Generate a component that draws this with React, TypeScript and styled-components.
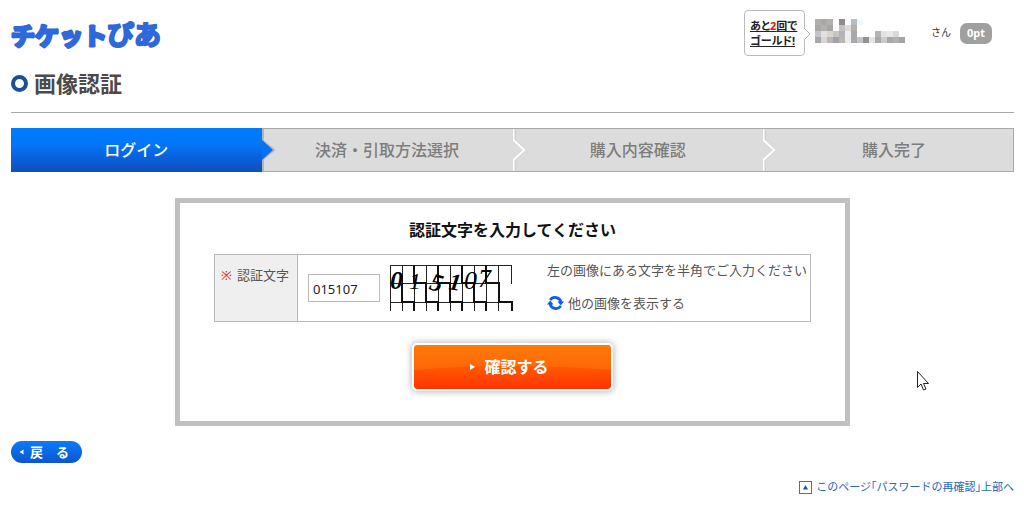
import React, { useState } from "react";
import styled, { createGlobalStyle } from "styled-components";

const GlobalStyle = createGlobalStyle`
  *, *::before, *::after { box-sizing: border-box; }
  body {
    margin: 0;
    background: #fff;
    color: #555;
    font-family: "Noto Sans", "Noto Sans CJK JP", sans-serif;
    font-size: 13px;
    line-height: 20px;
  }
`;

const Page = styled.div`
  position: relative;
  padding: 10px 10px 12px 11px;
`;

const Header = styled.header`
  display: flex;
  justify-content: space-between;
  align-items: flex-start;
  height: 46px;
`;

const LogoLink = styled.a`
  display: block;
  svg { display: block; }
`;

const Member = styled.div`
  display: flex;
  align-items: center;
  padding-right: 22px;
`;

const Balloon = styled.a`
  position: relative;
  width: 61px;
  height: 46px;
  padding: 7px 0 0 5px;
  border: 1px solid #bbb;
  border-radius: 4px;
  color: #222;
  font-size: 11px;
  font-weight: 700;
  line-height: 15px;
  white-space: nowrap;
  font-feature-settings: "palt";
  em { color: #f01010; font-style: normal; }
`;

const BalloonTail = styled.svg`
  position: absolute;
  top: 16px;
  left: 59px;
`;

const MaskedName = styled.svg`
  margin: 0 26px 4px 10px;
`;

const Honorific = styled.span`
  margin: 0 9px 2px 0;
  color: #333;
  font-size: 10px;
`;

const Points = styled.span`
  width: 32px;
  height: 21px;
  border-radius: 7px;
  background: #a0a0a0;
  color: #fff;
  font-size: 11px;
  font-weight: 700;
  text-align: center;
`;

const Title = styled.h1`
  display: flex;
  align-items: center;
  gap: 6px;
  height: 57px;
  margin: 0 0 15px;
  padding-bottom: 2px;
  border-bottom: 1px solid #aaa;
  color: #4c4948;
  font-size: 22px;
  font-weight: 700;
  line-height: 30px;
`;

const Ring = styled.span`
  width: 17px;
  height: 17px;
  border: 4px solid #1b4f9c;
  border-radius: 50%;
`;

const Steps = styled.ol`
  display: grid;
  grid-template-columns: repeat(4, 1fr);
  height: 44px;
  margin: 0 0 26px;
  padding: 0;
  list-style: none;
`;

const Step = styled.li<{ $current?: boolean; $last?: boolean }>`
  position: relative;
  display: flex;
  align-items: center;
  justify-content: center;
  padding-left: ${(p) => (p.$last ? "12px" : "0")};
  border: solid #aaa;
  border-width: ${(p) => (p.$current ? "0" : p.$last ? "1px 1px 1px 0" : "1px 0")};
  background: ${(p) =>
    p.$current ? "linear-gradient(#007bff 0%, #0277fa 35%, #0a5fdb 70%, #114fba 100%)" : "#dcdcdc"};
  color: ${(p) => (p.$current ? "#fff" : "#7d7d7d")};
  font-size: 16px;
  font-weight: 500;
`;

const StepArrow = styled.svg<{ $current?: boolean }>`
  position: absolute;
  z-index: 1;
  top: ${(p) => (p.$current ? "0" : "-1px")};
  left: 100%;
`;

const Panel = styled.main`
  width: 66%;
  min-width: 675px;
  margin: 0 auto 15px;
  padding: 17px 34px 30px;
  border: 5px solid #c0c0c0;
`;

const PanelHeading = styled.h2`
  margin: 0 0 13px;
  color: #111;
  font-size: 16px;
  font-weight: 700;
  line-height: 21px;
  text-align: center;
`;

const FormTable = styled.table`
  width: 100%;
  border-collapse: collapse;
  th, td { border: 1px solid #bbb; }
  th {
    width: 83px;
    padding: 10px 0 0 6px;
    background: #efefef;
    font-weight: 400;
    text-align: left;
    vertical-align: top;
    white-space: nowrap;
  }
  td { padding: 0 0 0 10px; }
`;

const Required = styled.span`
  margin-right: 5px;
  color: #e02020;
`;

const Entry = styled.div`
  display: flex;
  align-items: center;
  height: 66px;
`;

const CodeInput = styled.input`
  width: 72px;
  height: 28px;
  padding: 2px 4px 0;
  border: 1px solid #bbb;
  background: #fff;
  color: #222;
  font: 13px/20px "Noto Sans", sans-serif;
`;

const CodePicture = styled.svg`
  flex: none;
  margin: 0 34px 0 9px;
`;

const Notes = styled.div`
  display: flex;
  flex-direction: column;
  gap: 13px;
  padding-bottom: 4px;
  white-space: nowrap;
  p { margin: 0; }
`;

const ReloadLink = styled.a`
  display: flex;
  align-items: center;
  gap: 4px;
  color: #555;
  text-decoration: none;
`;

const Submit = styled.button`
  position: relative;
  display: flex;
  align-items: center;
  justify-content: center;
  gap: 8px;
  width: 201px;
  height: 48px;
  margin: 21px auto 0;
  padding: 0 6px 0 0;
  overflow: hidden;
  border: 2px solid #fff;
  border-radius: 5px;
  background: linear-gradient(#ff7300, #ff5a00 50%, #ff3300);
  background-clip: padding-box;
  box-shadow: 0 0 6px 1px #bbb;
  color: #fff;
  font: 700 16px/24px "Noto Sans", "Noto Sans CJK JP", sans-serif;
  span, .mark { position: relative; }
`;

const Gloss = styled.svg`
  position: absolute;
  inset: 0;
  width: 100%;
`;

const Back = styled.button`
  display: flex;
  align-items: center;
  gap: 6px;
  width: 71px;
  height: 22px;
  padding: 0 0 0 8px;
  border: 0;
  border-radius: 11px;
  background: linear-gradient(#0a7cfa, #0a56cf);
  color: #fff;
  font: 700 13px/20px "Noto Sans", "Noto Sans CJK JP", sans-serif;
`;

const Footer = styled.footer`
  display: flex;
  justify-content: flex-end;
  margin-top: 14px;
`;

const TopLink = styled.a`
  display: flex;
  align-items: center;
  gap: 4px;
  color: #2a66b8;
  font-size: 11px;
  text-decoration: none;
  font-feature-settings: "halt";
`;

const Pointer = styled.svg`
  position: absolute;
  left: 916px;
  top: 370px;
  pointer-events: none;
`;

const mosaic: string[][] = [
  ["b2aeb0", "a9a9a9", "b4b0ab", "", "8f8b8a", "", "b7bcc0", "f0f8fa", "", "", "", "", "", "", ""],
  ["aaa8a6", "b3b0b4", "a6a5a2", "", "c4c2c4", "dedcda", "b3b1ae", "", "", "", "", "", "", "", ""],
  ["c4c4c8", "e2e0e4", "dad4d0", "c8c4c0", "b4b4b6", "eeeeee", "a8a8aa", "", "", "", "b8b4b2", "e0e4e2", "eae8ea", "dad8da", ""],
  ["a8a8ac", "dcd4d0", "b8b8b8", "a0a2a6", "bab6b4", "ececec", "a6a8ae", "c4c4c4", "909296", "e4e4e2", "a8aab0", "cccaca", "a9a7a8", "b4b0b2", "a4a4a8"],
];

function Logo() {
  return (
    <svg width="160" height="46" viewBox="0 0 160 46" role="img" aria-label="チケットぴあ">
      <g
        fill="#2f68d8"
        stroke="#2f68d8"
        strokeLinejoin="round"
        fontFamily='"Noto Sans CJK JP", sans-serif'
        fontWeight="700"
      >
        <text x="0" y="35" fontSize="24" strokeWidth="3">チケット</text>
        <text x="96" y="35" fontSize="27" strokeWidth="2">ぴあ</text>
      </g>
    </svg>
  );
}

function Captcha() {
  const columns = Array.from({ length: 11 }, (_, i) => i);
  return (
    <CodePicture width="124" height="48" viewBox="0 0 124 48" role="img" aria-label="015107">
      <g fill="none" stroke="#222">
        {columns.map((i) => (
          <path key={i} d={i === 10 ? "M122.5 1V20M122.5 38V47" : `M${i * 12 + 1.5} 1V47`} />
        ))}
        <path d="M1 1.5H123M1 19.5H110M1 38.5H123" />
      </g>
      <path
        d="M13 19V38H25V47M25 1V19H37V38H49V47M49 1V19H61V38H73V47M73 1V19H85V38H97V47M97 1V19H110V38H123V47"
        fill="none"
        stroke="#111"
        strokeWidth="2"
      />
      <g fill="#000" fontFamily='"Liberation Serif", serif' fontStyle="italic">
        <text x="1" y="25" fontSize="26" fontWeight="700">0</text>
        <text x="20" y="25" fontSize="24">1</text>
        <text x="41" y="27" fontSize="25" fontWeight="700" transform="rotate(16 47 20)">5</text>
        <text x="60" y="26" fontSize="24" fontWeight="700" transform="rotate(8 65 19)">1</text>
        <text x="75" y="25" fontSize="26">0</text>
        <text x="89" y="23" fontSize="26">7</text>
      </g>
    </CodePicture>
  );
}

function ArrowShape({ current }: { current?: boolean }) {
  return (
    <StepArrow $current={current} width="16" height="44" viewBox="0 0 16 44" aria-hidden="true">
      {current ? (
        <>
          <path d="M1 1V13L12 22L1 31V43" fill="none" stroke="#b4b4b4" strokeWidth="2" />
          <path d="M0 12L11 22L0 32Z" fill="#0672f0" />
        </>
      ) : (
        <>
          <path d="M0 12L11 22L0 32Z" fill="#dcdcdc" />
          <path d="M2 1V12L13 22L2 32V43" fill="none" stroke="#c4c4c4" strokeWidth="1" />
          <path d="M.5 1V12L11.5 22L.5 32V43" fill="none" stroke="#fff" strokeWidth="2" />
        </>
      )}
    </StepArrow>
  );
}

const steps = ["ログイン", "決済・引取方法選択", "購入内容確認", "購入完了"];

export default function App() {
  const [code, setCode] = useState("015107");

  return (
    <>
      <GlobalStyle />
      <Page id="top">
        <Header>
          <LogoLink href="#top">
            <Logo />
          </LogoLink>
          <Member>
            <Balloon href="#gold">
              あと<em>2</em>回で
              <br />
              ゴールド!
              <BalloonTail width="8" height="14" viewBox="0 0 8 14" aria-hidden="true">
                <path d="M0 1L6 7L0 13" fill="#fff" stroke="#bbb" />
              </BalloonTail>
            </Balloon>
            <MaskedName width="90" height="24" viewBox="0 0 90 24" aria-hidden="true">
              {mosaic.map((row, y) =>
                row.map((c, x) =>
                  c ? <rect key={`${x}-${y}`} x={x * 6} y={y * 6} width="6" height="6" fill={`#${c}`} /> : null,
                ),
              )}
            </MaskedName>
            <Honorific>さん</Honorific>
            <Points>0pt</Points>
          </Member>
        </Header>

        <Title>
          <Ring />
          画像認証
        </Title>

        <Steps>
          {steps.map((label, i) => (
            <Step key={label} $current={i === 0} $last={i === 3} aria-current={i === 0 ? "step" : undefined}>
              {label}
              {i < 3 && <ArrowShape current={i === 0} />}
            </Step>
          ))}
        </Steps>

        <Panel>
          <form onSubmit={(e) => e.preventDefault()}>
            <PanelHeading>認証文字を入力してください</PanelHeading>
            <FormTable>
              <tbody>
                <tr>
                  <th scope="row">
                    <Required>※</Required>
                    <label htmlFor="code">認証文字</label>
                  </th>
                  <td>
                    <Entry>
                      <CodeInput id="code" type="text" value={code} onChange={(e) => setCode(e.target.value)} />
                      <Captcha />
                      <Notes>
                        <p>左の画像にある文字を半角でご入力ください</p>
                        <ReloadLink href="#reload">
                          <svg width="17" height="16" viewBox="0 0 17 16" aria-hidden="true">
                            <path
                              d="M3.2 5A6 6 0 0 1 14 7.5M13.8 11A6 6 0 0 1 3 8.5"
                              fill="none"
                              stroke="#0a5cf5"
                              strokeWidth="2.8"
                            />
                            <path d="M10.5 6.5H17L13.8 10.5ZM0 9.5H6.5L3.2 5.5Z" fill="#0a5cf5" />
                          </svg>
                          他の画像を表示する
                        </ReloadLink>
                      </Notes>
                    </Entry>
                  </td>
                </tr>
              </tbody>
            </FormTable>
            <Submit type="submit">
              <Gloss height="44" viewBox="0 0 197 44" preserveAspectRatio="none" aria-hidden="true">
                <path d="M0 0H197V25Q98 17 0 25Z" fill="#ff8c1a" fillOpacity=".3" />
              </Gloss>
              <svg className="mark" width="6" height="8" viewBox="0 0 6 8" aria-hidden="true">
                <path d="M0 1L5 4L0 7Z" fill="#fff" />
              </svg>
              <span>確認する</span>
            </Submit>
          </form>
        </Panel>

        <Back type="button">
          <svg width="5" height="6" viewBox="0 0 5 6" aria-hidden="true">
            <path d="M4.5 .5L.5 3L4.5 5.5Z" fill="#fff" />
          </svg>
          戻　る
        </Back>

        <Footer>
          <TopLink href="#top">
            <svg width="13" height="13" viewBox="0 0 13 13" aria-hidden="true">
              <rect x=".5" y=".5" width="12" height="12" fill="#fff" stroke="#3d6fd0" />
              <path d="M6.5 4L9 8.5H4Z" fill="#1d4fc0" />
            </svg>
            このページ「パスワードの再確認」上部へ
          </TopLink>
        </Footer>

        <Pointer width="14" height="22" viewBox="0 0 14 22" aria-hidden="true">
          <path d="M1.5 1.5V17.5L5 14L7.5 20L10 19L7.5 13.5H12.5Z" fill="#fff" stroke="#222" />
        </Pointer>
      </Page>
    </>
  );
}
